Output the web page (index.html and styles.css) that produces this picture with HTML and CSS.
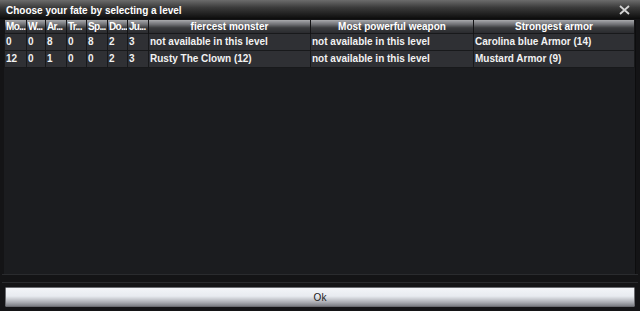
FILE: index.html
```html
<!DOCTYPE html>
<html lang="en">
<head>
    <meta charset="utf-8">
    <title>Choose your fate</title>
    <link rel="stylesheet" href="styles.css">
</head>
<body>
    <div class="dialog">
        <!-- title bar -->
        <div class="titlebar">
            <span class="title">Choose your fate by selecting a level</span>
            <svg class="close" width="11" height="10" viewBox="0 0 11 10">
                <path d="M1 1 L10 9 M10 1 L1 9" stroke="#d4d4d4" stroke-width="1.8"/>
            </svg>
        </div>

        <!-- level table -->
        <div class="table-wrap">
            <table class="levels">
                <colgroup>
                    <col style="width:22px"><col style="width:19px"><col style="width:21px">
                    <col style="width:20px"><col style="width:21px"><col style="width:20px">
                    <col style="width:21px"><col style="width:162px"><col style="width:163px">
                    <col>
                </colgroup>
                <thead>
                    <tr>
                        <th class="short">Mo...</th>
                        <th class="short">W...</th>
                        <th class="short">Ar...</th>
                        <th class="short">Tr...</th>
                        <th class="short">Sp...</th>
                        <th class="short">Do...</th>
                        <th class="short">Ju...</th>
                        <th>fiercest monster</th>
                        <th>Most powerful weapon</th>
                        <th>Strongest armor</th>
                    </tr>
                </thead>
                <tbody>
                    <tr>
                        <td>0</td><td>0</td><td>8</td><td>0</td><td>8</td><td>2</td><td>3</td>
                        <td>not available in this level</td>
                        <td>not available in this level</td>
                        <td>Carolina blue Armor (14)</td>
                    </tr>
                    <tr>
                        <td>12</td><td>0</td><td>1</td><td>0</td><td>0</td><td>2</td><td>3</td>
                        <td>Rusty The Clown (12)</td>
                        <td>not available in this level</td>
                        <td>Mustard Armor (9)</td>
                    </tr>
                </tbody>
            </table>
        </div>

        <div class="separator"></div>

        <div class="footer">
            <button class="ok-btn">Ok</button>
        </div>
    </div>
</body>
</html>
```

FILE: styles.css
```css
html, body {
    margin: 0;
    padding: 0;
    background: #141416;
}

.dialog {
    width: 640px;
    height: 311px;
    display: flex;
    flex-direction: column;
    font-family: "Liberation Sans", Arial, sans-serif;
    font-weight: bold;
    font-size: 10px;
    color: #f2f2f2;
}

/* 标题栏 */
.titlebar {
    height: 19px;
    flex: none;
    display: flex;
    align-items: center;
    justify-content: space-between;
    padding: 1px 10px 0 6px;
    box-sizing: border-box;
    background: linear-gradient(to bottom, #6c6c6c 0%, #3a3a3a 40%, #0c0c0c 100%);
}

.title {
    font-size: 10px;
    color: #ffffff;
}

.close {
    display: block;
}

/* 表格区域 */
.table-wrap {
    flex: 1;
    margin: 1px 4px 0 4px;
    background: #1b1c1f;
    border-right: 1px solid #0d0d0e;
}

.levels {
    width: 100%;
    border-collapse: collapse;
    table-layout: fixed;
}

.levels th {
    height: 13px;
    padding: 0;
    line-height: 13px;
    text-align: center;
    white-space: nowrap;
    overflow: hidden;
    color: #ffffff;
    background: linear-gradient(to bottom, #a9aaad 0%, #6d6e72 35%, #3a3b3e 60%, #2a2b2e 100%);
    border-left: 1px solid #141416;
    border-right: 1px solid #141416;
}

.levels th.short {
    text-align: left;
    padding-left: 1px;
    letter-spacing: -0.7px;
}

.levels td {
    height: 16px;
    padding: 0 0 0 1px;
    line-height: 16px;
    white-space: nowrap;
    overflow: hidden;
    background: #2f3034;
    border: 1px solid #18191b;
}

.separator {
    flex: none;
    height: 7px;
    margin: 0 2px;
    border-top: 1px solid #2a2b2e;
    border-bottom: 1px solid #2a2b2e;
    background: #141416;
}

.footer {
    flex: none;
    padding: 4px 5px 4px 5px;
}

.ok-btn {
    display: block;
    width: 100%;
    height: 20px;
    padding: 0;
    font-family: "Liberation Sans", Arial, sans-serif;
    font-size: 10px;
    font-weight: normal;
    color: #1a2020;
    border: 1px solid #6a6b70;
    border-radius: 1px;
    background: linear-gradient(to bottom, #f3f5f8 0%, #e8ebf0 45%, #a9abb1 80%, #7c7e84 100%);
}
```
